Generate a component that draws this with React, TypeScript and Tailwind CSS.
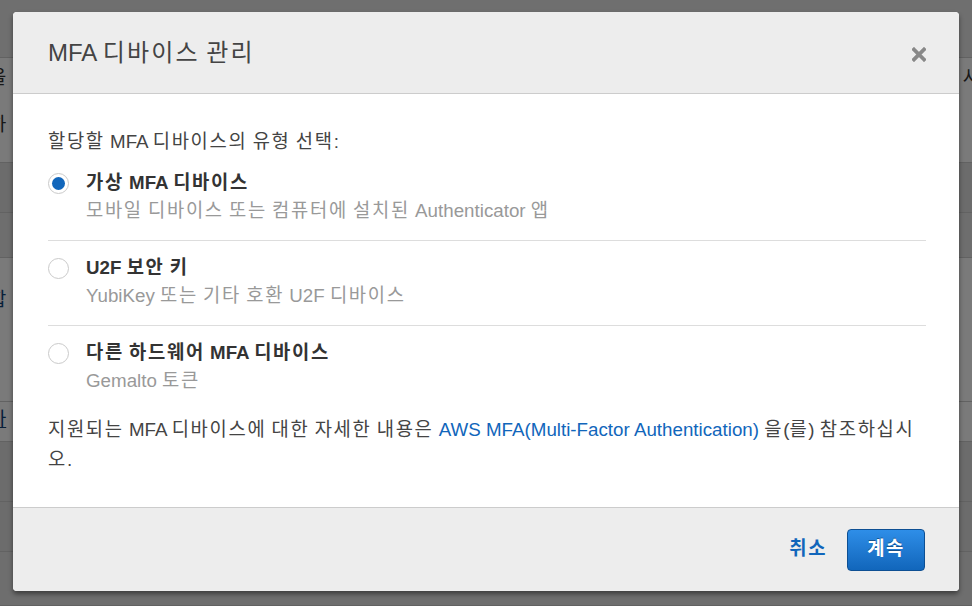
import React from "react";

const HANGUL = /([\uAC00-\uD7A3\u3131-\u318E]+)/;

function K({ children }: { children: string }) {
  const parts = children.split(HANGUL);
  return (
    <>
      {parts.map((p, i) =>
        i % 2 === 1 ? (
          <span key={i} className="tracking-[0.09em]">
            {p}
          </span>
        ) : (
          <React.Fragment key={i}>{p}</React.Fragment>
        )
      )}
    </>
  );
}

function Radio({ checked }: { checked?: boolean }) {
  return (
    <span className="flex h-[28px] shrink-0 items-center">
      <span className="flex h-[21px] w-[21px] items-center justify-center rounded-full border border-[#cacaca] bg-white">
        {checked && <span className="h-[13px] w-[13px] rounded-full bg-[#1166bb]" />}
      </span>
    </span>
  );
}

function Option({
  title,
  sub,
  checked,
  last,
}: {
  title: string;
  sub: string;
  checked?: boolean;
  last?: boolean;
}) {
  return (
    <div
      className={
        "flex items-start gap-[17px] pt-[13px] pb-[15px] " +
        (last ? "" : "border-b border-[#dddddd]")
      }
    >
      <Radio checked={checked} />
      <div className="flex flex-col">
        <div className="h-[28px] leading-[28px] font-bold text-[#333333]">
          <K>{title}</K>
        </div>
        <div className="h-[28px] leading-[28px] text-[#999999]">
          <K>{sub}</K>
        </div>
      </div>
    </div>
  );
}

function BgRow({
  h,
  bg,
  left,
  right,
}: {
  h: string;
  bg: string;
  left?: React.ReactNode;
  right?: React.ReactNode;
}) {
  return (
    <div className={`flex items-start justify-between border-b border-[#cccccc] ${h} ${bg}`}>
      <div className="-ml-[11px] text-[#333333]">{left}</div>
      <div className="-mr-[8px] text-[#333333]">{right}</div>
    </div>
  );
}

export default function App() {
  return (
    <div className="relative h-[606px] w-[972px] overflow-hidden bg-white font-['Liberation_Sans','Noto_Sans_CJK_KR',sans-serif] text-[18.75px]">
      {/* background page */}
      <div className="flex flex-col">
        <BgRow h="h-[58px]" bg="bg-[#e9e9e9]" />
        <BgRow
          h="h-[105px]"
          bg="bg-white"
          left={
            <div className="flex flex-col pt-[6px] leading-[28px]">
              <span>을</span>
              <span className="mt-[19px]">하</span>
            </div>
          }
          right={<div className="pt-[6px] leading-[28px]">사</div>}
        />
        <BgRow h="h-[50px]" bg="bg-[#e2e2e2]" />
        <BgRow h="h-[45px]" bg="bg-[#e5e5e5]" />
        <BgRow
          h="h-[144px]"
          bg="bg-white"
          left={<div className="pt-[28px] leading-[28px] text-[#11447a]">합</div>}
        />
        <BgRow
          h="h-[40px]"
          bg="bg-white"
          left={<div className="pt-[4px] leading-[28px] text-[#11447a] underline">아</div>}
        />
        <BgRow h="h-[60px]" bg="bg-[#e2e2e2]" />
        <BgRow h="h-[50px]" bg="bg-[#e2e2e2]" />
        <BgRow h="h-[54px]" bg="bg-[#e5e5e5]" />
      </div>

      {/* overlay */}
      <div className="absolute inset-0 bg-black/[0.52]" />

      {/* modal */}
      <div className="absolute left-[13px] top-[12px] flex w-[946px] flex-col overflow-hidden rounded-[4px] bg-white shadow-[0_3px_5px_rgba(0,0,0,0.45)]">
        <div className="flex h-[82px] items-center justify-between border-b border-[#cccccc] bg-[#ededed] pl-[35px] pr-[33px]">
          <h1 className="text-[24px] font-normal leading-none text-[#444444]">
            <K>MFA 디바이스 관리</K>
          </h1>
          <svg width="14" height="15" viewBox="0 0 14 15" className="mt-[4px]">
            <path d="M2 2.5 L12 12.5 M12 2.5 L2 12.5" stroke="#888888" strokeWidth="3.8" strokeLinecap="square" />
          </svg>
        </div>

        <div className="flex flex-col pl-[35px] pr-[33px] pt-[34px] pb-[32px] text-[#444444]">
          <p className="h-[28px] leading-[28px]">
            <K>할당할 MFA 디바이스의 유형 선택:</K>
          </p>
          <Option title="가상 MFA 디바이스" sub="모바일 디바이스 또는 컴퓨터에 설치된 Authenticator 앱" checked />
          <Option title="U2F 보안 키" sub="YubiKey 또는 기타 호환 U2F 디바이스" />
          <Option title="다른 하드웨어 MFA 디바이스" sub="Gemalto 토큰" last />
          <p className="mt-[5px] leading-[30px]">
            <K>지원되는 MFA 디바이스에 대한 자세한 내용은 </K>
            <a className="text-[#1166bb]">AWS MFA(Multi-Factor Authentication)</a>
            <K> 을(를) 참조하십시오.</K>
          </p>
        </div>

        <div className="flex h-[84px] items-center justify-end gap-[20px] border-t border-[#cccccc] bg-[#ededed] pr-[34px]">
          <a className="font-bold text-[#1166bb]">
            <K>취소</K>
          </a>
          <button className="flex h-[42px] items-center rounded-[4px] border border-[#0d4f93] bg-gradient-to-b from-[#2e8ee8] to-[#1166bb] px-[19px] font-bold text-white [text-shadow:0_-1px_0_rgba(0,0,0,0.35)]">
            <K>계속</K>
          </button>
        </div>
      </div>
    </div>
  );
}
